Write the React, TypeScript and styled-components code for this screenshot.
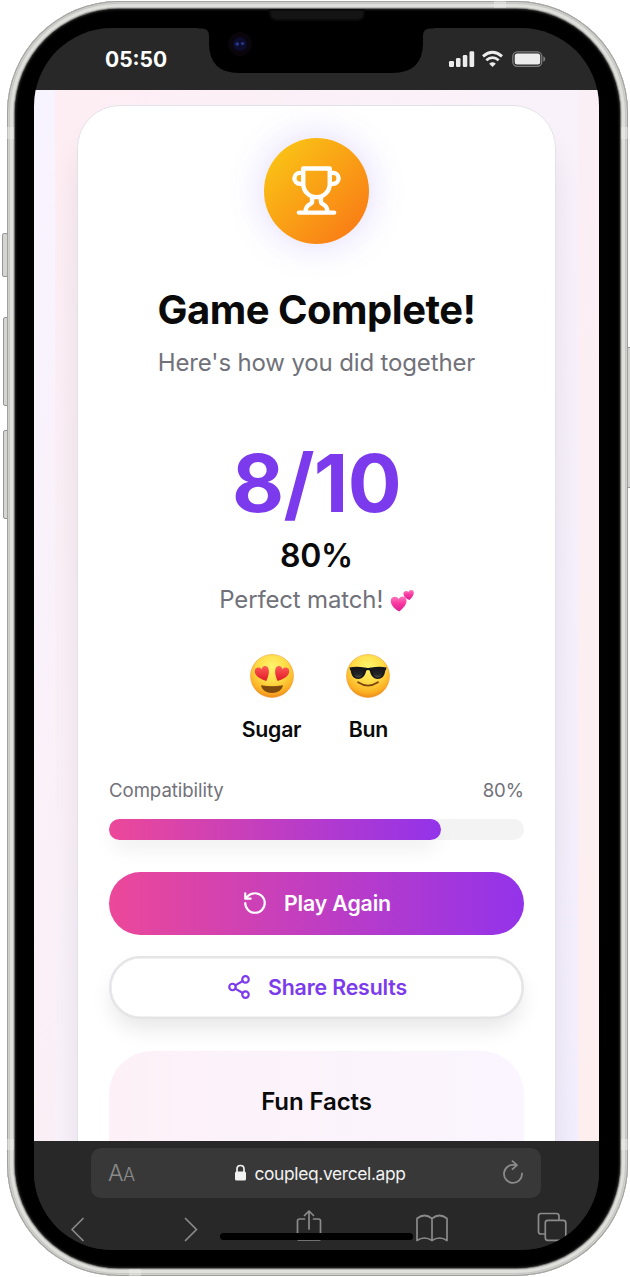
import React from "react";
import styled, { createGlobalStyle } from "styled-components";

const Global = createGlobalStyle`
  * { box-sizing: border-box; }
  body { margin: 0; background: #fff; font-family: Inter, "Liberation Sans", sans-serif; }
`;

const Stage = styled.main`
  position: relative;
  width: 630px;
  height: 1277px;
  padding: 1px 2px 1px 7px;
  overflow: hidden;
`;

const Frame = styled.div`
  position: relative;
  width: 621px;
  height: 1275px;
  padding: 8px;
  border-radius: 112px;
  background: #6b6b69;
  box-shadow: inset 0 0 0 1px #a0a09e, inset 0 0 0 2px #cfcfcc, inset 0 0 0 3px #c6c6c3, inset 0 0 0 6px #dfdfdb, inset 0 0 0 7px #bcbcb9;
`;

const Bezel = styled.div`
  height: 100%;
  padding: 19px 20px 18px 19px;
  border-radius: 104px;
  background: #000;
  box-shadow: inset 0 0 2px 1px #222;
`;

const Screen = styled.div`
  display: flex;
  flex-direction: column;
  height: 1222px;
  width: 565px;
  border-radius: 78px;
  overflow: hidden;
  background: #282828;
`;

const SideKey = styled.i<{ $top: number; $height: number; $side: "left" | "right"; $out: number }>`
  position: absolute;
  top: ${(p) => p.$top}px;
  ${(p) => p.$side}: ${(p) => p.$out}px;
  width: 6px;
  height: ${(p) => p.$height}px;
  border: 1px solid #969694;
  border-radius: 2px;
  background: #d4d4d1;
`;

const Band = styled.i<{ $edge: string }>`
  position: absolute;
  ${(p) => p.$edge};
  background: rgba(240, 240, 237, 0.4);
`;

const Speaker = styled.i`
  position: absolute;
  top: 8px;
  left: 262px;
  width: 96px;
  height: 12px;
  border: 2px solid #0a0a0a;
  border-radius: 0 0 7px 7px;
  background: #141414;
`;

const NotchSvg = styled.svg`
  position: absolute;
  top: 26px;
  left: 191px;
`;

const StatusBar = styled.header`
  display: flex;
  flex: none;
  align-items: center;
  justify-content: space-between;
  height: 62px;
  padding: 0 53px 0 71px;
`;

const Clock = styled.time`
  color: #fff;
  font-size: 21px;
  font-weight: 650;
`;

const Viewport = styled.div`
  flex: 1;
  min-height: 0;
  padding: 0 21px;
  overflow: hidden;
  background: linear-gradient(to bottom right, #f8f4ff 0%, #fbeff6 50%, #fdefee 100%);
`;

const Page = styled.div`
  height: 100%;
  padding: 15px 23px 0 22px;
  overflow: hidden;
  background: linear-gradient(to bottom right, #fdeef3 0%, #f9f2fb 50%, #f4effe 100%);
`;

const Card = styled.section`
  display: flex;
  flex-direction: column;
  align-items: center;
  width: 479px;
  height: 1200px;
  padding: 32px 31px 0;
  border: 1px solid #e2e3e7;
  border-radius: 43px;
  background: #fff;
  box-shadow: 0 30px 36px -7px rgba(10, 10, 10, 0.12);
`;

const Medal = styled.div`
  display: flex;
  align-items: center;
  justify-content: center;
  flex: none;
  width: 105.5px;
  height: 105.5px;
  margin-bottom: 0.5px;
  border-radius: 50%;
  background: linear-gradient(135deg, #facc15, #f97316);
  box-shadow: 0 0 38px rgba(99, 58, 237, 0.2);
`;

const Line = styled.div<{ $size: number; $height: number; $weight?: number; $color?: string; $gap?: number; $track?: number }>`
  display: flex;
  align-items: center;
  justify-content: center;
  flex: none;
  height: ${(p) => p.$height}px;
  margin: ${(p) => p.$gap ?? 0}px 0 0;
  color: ${(p) => p.$color ?? "#0a0a0a"};
  font-size: ${(p) => p.$size}px;
  font-weight: ${(p) => p.$weight ?? 400};
  letter-spacing: ${(p) => p.$track ?? 0}px;
  line-height: 1;
  white-space: pre;
`;

const Players = styled.div`
  display: flex;
  gap: 44px;
  margin-top: 37px;
`;

const Player = styled.div`
  display: flex;
  flex-direction: column;
  align-items: center;
`;

const MeterLabels = styled.div`
  display: flex;
  justify-content: space-between;
  align-items: center;
  width: 415px;
  height: 26px;
  margin-top: 31px;
  color: #71717a;
  font-size: 18.6px;
  letter-spacing: -0.05px;
`;

const Track = styled.div`
  flex: none;
  width: 415px;
  height: 21px;
  margin-top: 16px;
  border-radius: 11px;
  background: #f3f3f4;
`;

const Fill = styled.div`
  width: 80%;
  height: 100%;
  border-radius: inherit;
  background: linear-gradient(90deg, #ec4899, #9333ea);
  box-shadow: 0 11px 20px -3px rgba(0, 0, 0, 0.08);
`;

const Button = styled.button<{ $outline?: boolean }>`
  display: flex;
  align-items: center;
  justify-content: center;
  flex: none;
  gap: 16px;
  width: 415px;
  height: 63px;
  margin-top: ${(p) => (p.$outline ? 21 : 32)}px;
  padding: 0 0 1px;
  border: ${(p) => (p.$outline ? "2px solid #e4e4e6" : "0")};
  border-radius: 32px;
  background: ${(p) => (p.$outline ? "#fff" : "linear-gradient(90deg, #ec4899, #9333ea)")};
  color: ${(p) => (p.$outline ? "#7c3aed" : "#fff")};
  font: 600 21.3px Inter, sans-serif;
  letter-spacing: -0.15px;
  box-shadow: ${(p) => (p.$outline ? "inset 0 0 0 0.6px #e4e4e6, 0 12px 22px -3px rgba(0, 0, 0, 0.1)" : "none")};
`;

const Facts = styled.section`
  display: flex;
  justify-content: center;
  flex: none;
  width: 415px;
  height: 200px;
  margin-top: 32px;
  padding-top: 32px;
  border-radius: 43px;
  background: linear-gradient(90deg, #fdf1f7, #faf5ff);
`;

const BrowserBar = styled.footer`
  flex: none;
  height: 109px;
  padding: 7px 32px 0 34px;
  background: #282828;
`;

const Address = styled.div`
  display: flex;
  align-items: center;
  justify-content: space-between;
  width: 450px;
  height: 50px;
  margin-left: 23px;
  padding: 0 17px;
  border-radius: 10px;
  background: #383838;
  color: #8b8b8b;
`;

const TextSize = styled.span`
  width: 30px;
  font-size: 23px;
  font-weight: 300;
  white-space: nowrap;
  letter-spacing: -0.5px;
  small { font-size: 18px; }
`;

const Url = styled.span`
  display: flex;
  align-items: center;
  gap: 7px;
  color: #f2f2f2;
  font-size: 17.4px;
  letter-spacing: -0.35px;
`;

const Nav = styled.nav`
  display: grid;
  grid-template-columns: 111.5px 115px 120px 121.5px 32px;
  height: 36px;
  margin-top: 12px;
  color: #8b8b8b;
`;

const HomeBar = styled.i`
  position: absolute;
  left: 213px;
  top: 1232px;
  width: 193px;
  height: 7px;
  border-radius: 4px;
  background: #000;
`;

const stroke = { fill: "none", stroke: "currentColor", strokeLinecap: "round", strokeLinejoin: "round" } as const;

const Trophy = () => (
  <svg width="53" height="53" viewBox="0 0 24 24" {...stroke} stroke="#fff" strokeWidth="2">
    <path d="M6 9H4.5a2.5 2.5 0 0 1 0-5H6M18 9h1.5a2.5 2.5 0 0 0 0-5H18M4 22h16M10 14.66V17c0 .55-.47.98-.97 1.21C7.85 18.75 7 20.24 7 22M14 14.66V17c0 .55.47.98.97 1.21C16.15 18.75 17 20.24 17 22M18 2H6v7a6 6 0 0 0 12 0V2Z" />
  </svg>
);

const Face = ({ cool }: { cool?: boolean }) => {
  const id = cool ? "cool" : "love";
  return (
    <svg width="46" height="46" viewBox="0 0 46 46">
      <defs>
        <radialGradient id={id} cx=".5" cy=".3" r=".7">
          <stop offset="0" stopColor="#fff56e" />
          <stop offset=".5" stopColor="#fedb45" />
          <stop offset=".85" stopColor="#fbae22" />
          <stop offset="1" stopColor="#ec8a1c" />
        </radialGradient>
        <linearGradient id="heartRed" x1="0" y1="0" x2="0" y2="1">
          <stop offset="0" stopColor="#ff5b55" />
          <stop offset="1" stopColor="#e01a28" />
        </linearGradient>
        <linearGradient id="lens" x1="0" y1="0" x2="0" y2="1">
          <stop offset="0" stopColor="#17191c" />
          <stop offset=".6" stopColor="#222527" />
          <stop offset="1" stopColor="#4a4c49" />
        </linearGradient>
      </defs>
      <circle cx="23" cy="23" r="21.5" fill={`url(#${id})`} stroke="#e99228" strokeWidth=".5" />
      {cool ? (
        <>
          <path d="M4.500 14.500Q12 13 19.500 14.600 23 15.300 26.500 14.600 34 13 41.500 14.500L41 16.800 40.300 17.500C39.500 23.500 36.800 25.900 32.600 25.900 28.300 25.900 25.800 22.500 24.800 17.800Q23 16.300 21.200 17.800C20.200 22.500 17.700 25.900 13.400 25.900 9.200 25.900 6.500 23.500 5.700 17.500L5 16.800Z" fill="#141618" />
          <path d="M7.500 17Q13 15.800 18.800 17C18 22 16.500 24.500 13.400 24.500S8.300 22.500 7.500 17ZM27.200 17Q33 15.800 38.500 17C37.700 22 35.700 24.500 32.600 24.500S28 22 27.200 17Z" fill="url(#lens)" />
          <path d="M13 29.300q10 6.500 20 0" fill="none" stroke="#7c4510" strokeWidth="1.800" strokeLinecap="round" />
        </>
      ) : (
        <>
          <path d="M17.300 28C12 26.300 6 23.300 5.800 18.500c-.1-4 4.400-5.200 6.900-2.200.3-3.900 5.100-4.600 6.500-1.300 1.700 4.300-.1 9-1.900 13Z" fill="url(#heartRed)" />
          <path d="M28.700 28C34 26.300 40 23.300 40.200 18.500c.1-4-4.400-5.200-6.900-2.200-.3-3.900-5.100-4.600-6.500-1.300-1.700 4.300.1 9 1.900 13Z" fill="url(#heartRed)" />
          <path d="M12 32.300q11 1.800 22 0c-.9 4.900-5.200 7.700-11 7.700s-10.100-2.800-11-7.700Z" fill="#7f4a0e" />
        </>
      )}
    </svg>
  );
};

const Hearts = () => (
  <svg width="24" height="24" viewBox="0 0 25 25">
    <defs>
      <linearGradient id="pinkHeart" x1="0" y1="0" x2="0" y2="1">
        <stop offset="0" stopColor="#ff76bd" />
        <stop offset=".5" stopColor="#f8359f" />
        <stop offset="1" stopColor="#d91f93" />
      </linearGradient>
    </defs>
    <path d="M9.500 24.500C5 22 .8 18 .800 13.300c.1-4.600 6-5.700 8.200-1.700 1.500-4 7.600-3.600 8.200.8.600 4.700-4 9-7.700 12.100Z" fill="url(#pinkHeart)" />
    <path d="M20.200 12.500c-3-1.300-6.100-3.400-6.200-6.500 0-2.900 3.700-3.900 5.200-1.600.6-2.800 4.800-3.200 5.500-.3.600 3.200-2.200 6.100-4.500 8.400Z" fill="url(#pinkHeart)" />
  </svg>
);

const StatusIcons = () => (
  <svg width="98" height="18" viewBox="0 0 98 18" fill="#ececec">
    <rect x="1" y="11" width="5" height="6" rx="1.300" />
    <rect x="8" y="8" width="4.500" height="9" rx="1.300" />
    <rect x="14.800" y="5" width="4.500" height="12" rx="1.300" />
    <rect x="21.500" y="1.300" width="4.700" height="15.700" rx="1.300" />
    <path d="M35 6.300Q44.500-1.800 54 6.300" fill="none" stroke="#ececec" strokeWidth="2.900" />
    <path d="M38.300 10.300q6.200-5.300 12.400 0" fill="none" stroke="#ececec" strokeWidth="2.800" />
    <path d="m44.500 17-3.300-3.300q3.300-2.800 6.600 0Z" />
    <rect x="64.800" y="1.800" width="29" height="14.500" rx="4.500" fill="none" stroke="#7c7c7c" strokeWidth="1.300" />
    <rect x="66.700" y="3.500" width="25.500" height="11" rx="2.500" />
    <path d="M95.300 6.200q2 .8 2 2.800t-2 2.800Z" fill="#7c7c7c" />
  </svg>
);

const Notch = () => (
  <NotchSvg width="236" height="47" viewBox="0 0 236 47">
    <path d="M0 0H236V1.500H232Q225 1.500 225 9V16Q225 46 194 46H41Q11 46 11 16V9Q11 1.500 4 1.500H0Z" fill="#000" />
    <circle cx="42" cy="17" r="12" fill="#09050b" />
    <circle cx="42" cy="17" r="7" fill="#0c0d2c" />
    <circle cx="39.200" cy="17" r="1.800" fill="#28378c" />
    <circle cx="44.500" cy="16.500" r="1.600" fill="#28378c" />
  </NotchSvg>
);

const players = [
  { name: "Sugar", cool: false },
  { name: "Bun", cool: true },
];

export default function App() {
  return (
    <Stage>
      <Global />
      <SideKey $side="left" $out={2} $top={233} $height={44} />
      <SideKey $side="left" $out={3} $top={317} $height={89} />
      <SideKey $side="left" $out={3} $top={430} $height={89} />
      <SideKey $side="right" $out={-2} $top={347} $height={141} />
      <Frame>
        <Bezel>
          <Screen>
            <StatusBar>
              <Clock>05:50</Clock>
              <StatusIcons />
            </StatusBar>
            <Viewport>
              <Page>
                <Card>
                  <Medal><Trophy /></Medal>
                  <Line as="h1" $size={40} $height={48} $weight={700} $gap={42} $track={-0.5}>Game Complete!</Line>
                  <Line $size={24} $height={34} $gap={12} $color="#71717a" $track={-0.15}>Here's how you did together</Line>
                  <Line $size={80} $height={80} $weight={700} $gap={63} $color="#7c3aed" $track={-0.6}>8/10</Line>
                  <Line $size={32} $height={40} $weight={600} $gap={13} $track={-0.3}>80%</Line>
                  <Line $size={24} $height={32} $gap={8} $color="#71717a" $track={-0.15}>Perfect match! <Hearts /></Line>
                  <Players>
                    {players.map((p) => (
                      <Player key={p.name}>
                        <Face cool={p.cool} />
                        <Line $size={21.3} $height={32} $weight={600} $gap={15} $track={-0.25}>{p.name}</Line>
                      </Player>
                    ))}
                  </Players>
                  <MeterLabels><span>Compatibility</span><span>80%</span></MeterLabels>
                  <Track><Fill /></Track>
                  <Button>
                    <svg width="26" height="26" viewBox="0 0 24 24" {...stroke} strokeWidth="2">
                      <path d="M3 12a9 9 0 1 0 9-9 9.750 9.750 0 0 0-6.740 2.740L3 8M3 3v5h5" />
                    </svg>
                    Play Again
                  </Button>
                  <Button $outline>
                    <svg width="26" height="26" viewBox="0 0 24 24" {...stroke} strokeWidth="2">
                      <circle cx="18" cy="5" r="3" />
                      <circle cx="6" cy="12" r="3" />
                      <circle cx="18" cy="19" r="3" />
                      <path d="m8.590 13.510 6.830 3.980M15.410 6.510l-6.820 3.980" />
                    </svg>
                    Share Results
                  </Button>
                  <Facts>
                    <Line as="h2" $size={24} $height={37} $weight={600} $track={-0.1}>Fun Facts</Line>
                  </Facts>
                </Card>
              </Page>
            </Viewport>
            <BrowserBar>
              <Address>
                <TextSize>A<small>A</small></TextSize>
                <Url>
                  <svg width="13" height="18" viewBox="0 0 13 18">
                    <path d="M3 8V5q0-3.500 3.500-3.500T10 5v3" fill="none" stroke="#f2f2f2" strokeWidth="1.700" />
                    <rect x="1" y="7.500" width="11" height="9" rx="1.500" fill="#f2f2f2" />
                  </svg>
                  coupleq.vercel.app
                </Url>
                <svg width="22" height="26" viewBox="0 0 22 26" {...stroke} strokeWidth="1.800">
                  <path d="M13.500 5.200A9 9 0 1 0 20 13.500M10.500 1.200l4.500 4-4.500 4" />
                </svg>
              </Address>
              <Nav>
                <svg width="20" height="36" viewBox="0 0 20 36" {...stroke} strokeWidth="1.700"><path d="M15 8.500 4 19.500l11 11" /></svg>
                <svg width="20" height="36" viewBox="0 0 20 36" {...stroke} strokeWidth="1.700"><path d="m5.500 8.500 11 11-11 11" /></svg>
                <svg width="28" height="36" viewBox="0 0 28 36" {...stroke} strokeWidth="1.700"><path d="M9.500 9H4.500q-2 0-2 2v17q0 2 2 2h19q2 0 2-2V11q0-2-2-2h-5M14 19V1M9.500 5.500 14 1l4.500 4.500" /></svg>
                <svg width="34" height="36" viewBox="0 0 34 36" {...stroke} strokeWidth="1.700"><path d="M17 8.500Q9.500 2.500 2 8.500v22q7.500-5 15 0 7.500-5 15 0v-22Q24.500 2.500 17 8.500Zm0 0v22" /></svg>
                <svg width="32" height="36" viewBox="0 0 32 36" {...stroke} strokeWidth="1.700"><path d="M9 24H5q-2.500 0-2.500-2.500V6Q2.500 3.500 5 3.500h15.500Q23 3.500 23 6v4" /><rect x="9.300" y="10.300" width="20.500" height="20" rx="2.500" /></svg>
              </Nav>
            </BrowserBar>
          </Screen>
        </Bezel>
        <Speaker />
        <Notch />
        <HomeBar />
        <Band $edge="left:0;top:126px;width:7px;height:12px" />
        <Band $edge="right:0;top:126px;width:7px;height:12px" />
        <Band $edge="left:0;top:1138px;width:7px;height:11px" />
        <Band $edge="right:0;top:1138px;width:7px;height:11px" />
        <Band $edge="left:122px;bottom:0;width:12px;height:7px" />
        <Band $edge="right:122px;top:0;width:12px;height:7px" />
      </Frame>
    </Stage>
  );
}
